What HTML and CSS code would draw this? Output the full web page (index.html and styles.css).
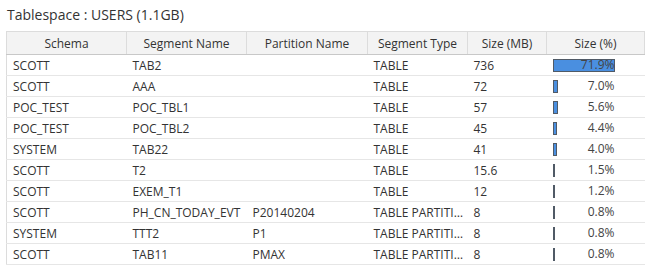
FILE: index.html
```html
<!DOCTYPE html>
<html>
<head>
<meta charset="utf-8">
<link rel="stylesheet" href="styles.css">
</head>
<body>
<div class="panel">
  <div class="title">Tablespace : USERS (1.1GB)</div>
  <table class="grid">
    <colgroup>
      <col class="c1"><col class="c2"><col class="c3"><col class="c4"><col class="c5"><col class="c6">
    </colgroup>
    <thead>
      <tr><th>Schema</th><th>Segment Name</th><th>Partition Name</th><th>Segment Type</th><th>Size (MB)</th><th>Size (%)</th></tr>
    </thead>
    <tbody>
      <tr><td>SCOTT</td><td>TAB2</td><td></td><td>TABLE</td><td>736</td><td><div class="pct"><div class="bar" style="width:62px"></div><span>71.9%</span></div></td></tr>
      <tr><td>SCOTT</td><td>AAA</td><td></td><td>TABLE</td><td>72</td><td><div class="pct"><div class="bar" style="width:5px"></div><span>7.0%</span></div></td></tr>
      <tr><td>POC_TEST</td><td>POC_TBL1</td><td></td><td>TABLE</td><td>57</td><td><div class="pct"><div class="bar" style="width:5px"></div><span>5.6%</span></div></td></tr>
      <tr><td>POC_TEST</td><td>POC_TBL2</td><td></td><td>TABLE</td><td>45</td><td><div class="pct"><div class="bar" style="width:4px"></div><span>4.4%</span></div></td></tr>
      <tr><td>SYSTEM</td><td>TAB22</td><td></td><td>TABLE</td><td>41</td><td><div class="pct"><div class="bar" style="width:4px"></div><span>4.0%</span></div></td></tr>
      <tr><td>SCOTT</td><td>T2</td><td></td><td>TABLE</td><td>15.6</td><td><div class="pct"><div class="bar" style="width:2px"></div><span>1.5%</span></div></td></tr>
      <tr><td>SCOTT</td><td>EXEM_T1</td><td></td><td>TABLE</td><td>12</td><td><div class="pct"><div class="bar" style="width:2px"></div><span>1.2%</span></div></td></tr>
      <tr><td>SCOTT</td><td>PH_CN_TODAY_EVT</td><td>P20140204</td><td>TABLE PARTITION</td><td>8</td><td><div class="pct"><div class="bar" style="width:2px"></div><span>0.8%</span></div></td></tr>
      <tr><td>SYSTEM</td><td>TTT2</td><td>P1</td><td>TABLE PARTITION</td><td>8</td><td><div class="pct"><div class="bar" style="width:2px"></div><span>0.8%</span></div></td></tr>
      <tr><td>SCOTT</td><td>TAB11</td><td>PMAX</td><td>TABLE PARTITION</td><td>8</td><td><div class="pct"><div class="bar" style="width:2px"></div><span>0.8%</span></div></td></tr>
    </tbody>
  </table>
</div>
</body>
</html>
```
FILE: styles.css
```css
html, body {
  margin: 0;
  padding: 0;
  background: #ffffff;
}
body {
  font-family: "Open Sans", "Noto Sans", sans-serif;
  color: #333333;
}
.panel {
  padding: 5px 0 0 6px;
}
.title {
  font-size: 14px;
  line-height: 20px;
  height: 20px;
  padding-left: 1px;
  margin-bottom: 6px;
  color: #333;
}
.grid {
  border-collapse: collapse;
  table-layout: fixed;
  width: 638px;
  font-size: 12px;
}
.c1 { width: 120px; }
.c2 { width: 120px; }
.c3 { width: 121px; }
.c4 { width: 100px; }
.c5 { width: 79px; }
.c6 { width: 98px; }
.grid th {
  background: #f3f3f3;
  font-weight: normal;
  height: 22px;
  padding: 0;
  text-align: center;
  border: 1px solid #dcdcdc;
  border-bottom: 1px solid #c8c8c8;
  color: #333;
}
.grid td {
  height: 20px;
  padding: 0 4px 0 6px;
  border-bottom: 1px solid #e6e6e6;
  white-space: nowrap;
  overflow: hidden;
  text-overflow: ellipsis;
  color: #333;
}
.grid td:first-child {
  border-left: 1px solid #dcdcdc;
}
.grid td:last-child {
  padding-right: 0;
}
.pct {
  position: relative;
  width: 62px;
  height: 13px;
}
.bar {
  height: 13px;
  box-sizing: border-box;
  background: #4a8fe0;
  border: 1px solid #505a66;
}
.pct span {
  position: absolute;
  right: 0;
  top: -3px;
  line-height: 18px;
  color: #444;
}
```
